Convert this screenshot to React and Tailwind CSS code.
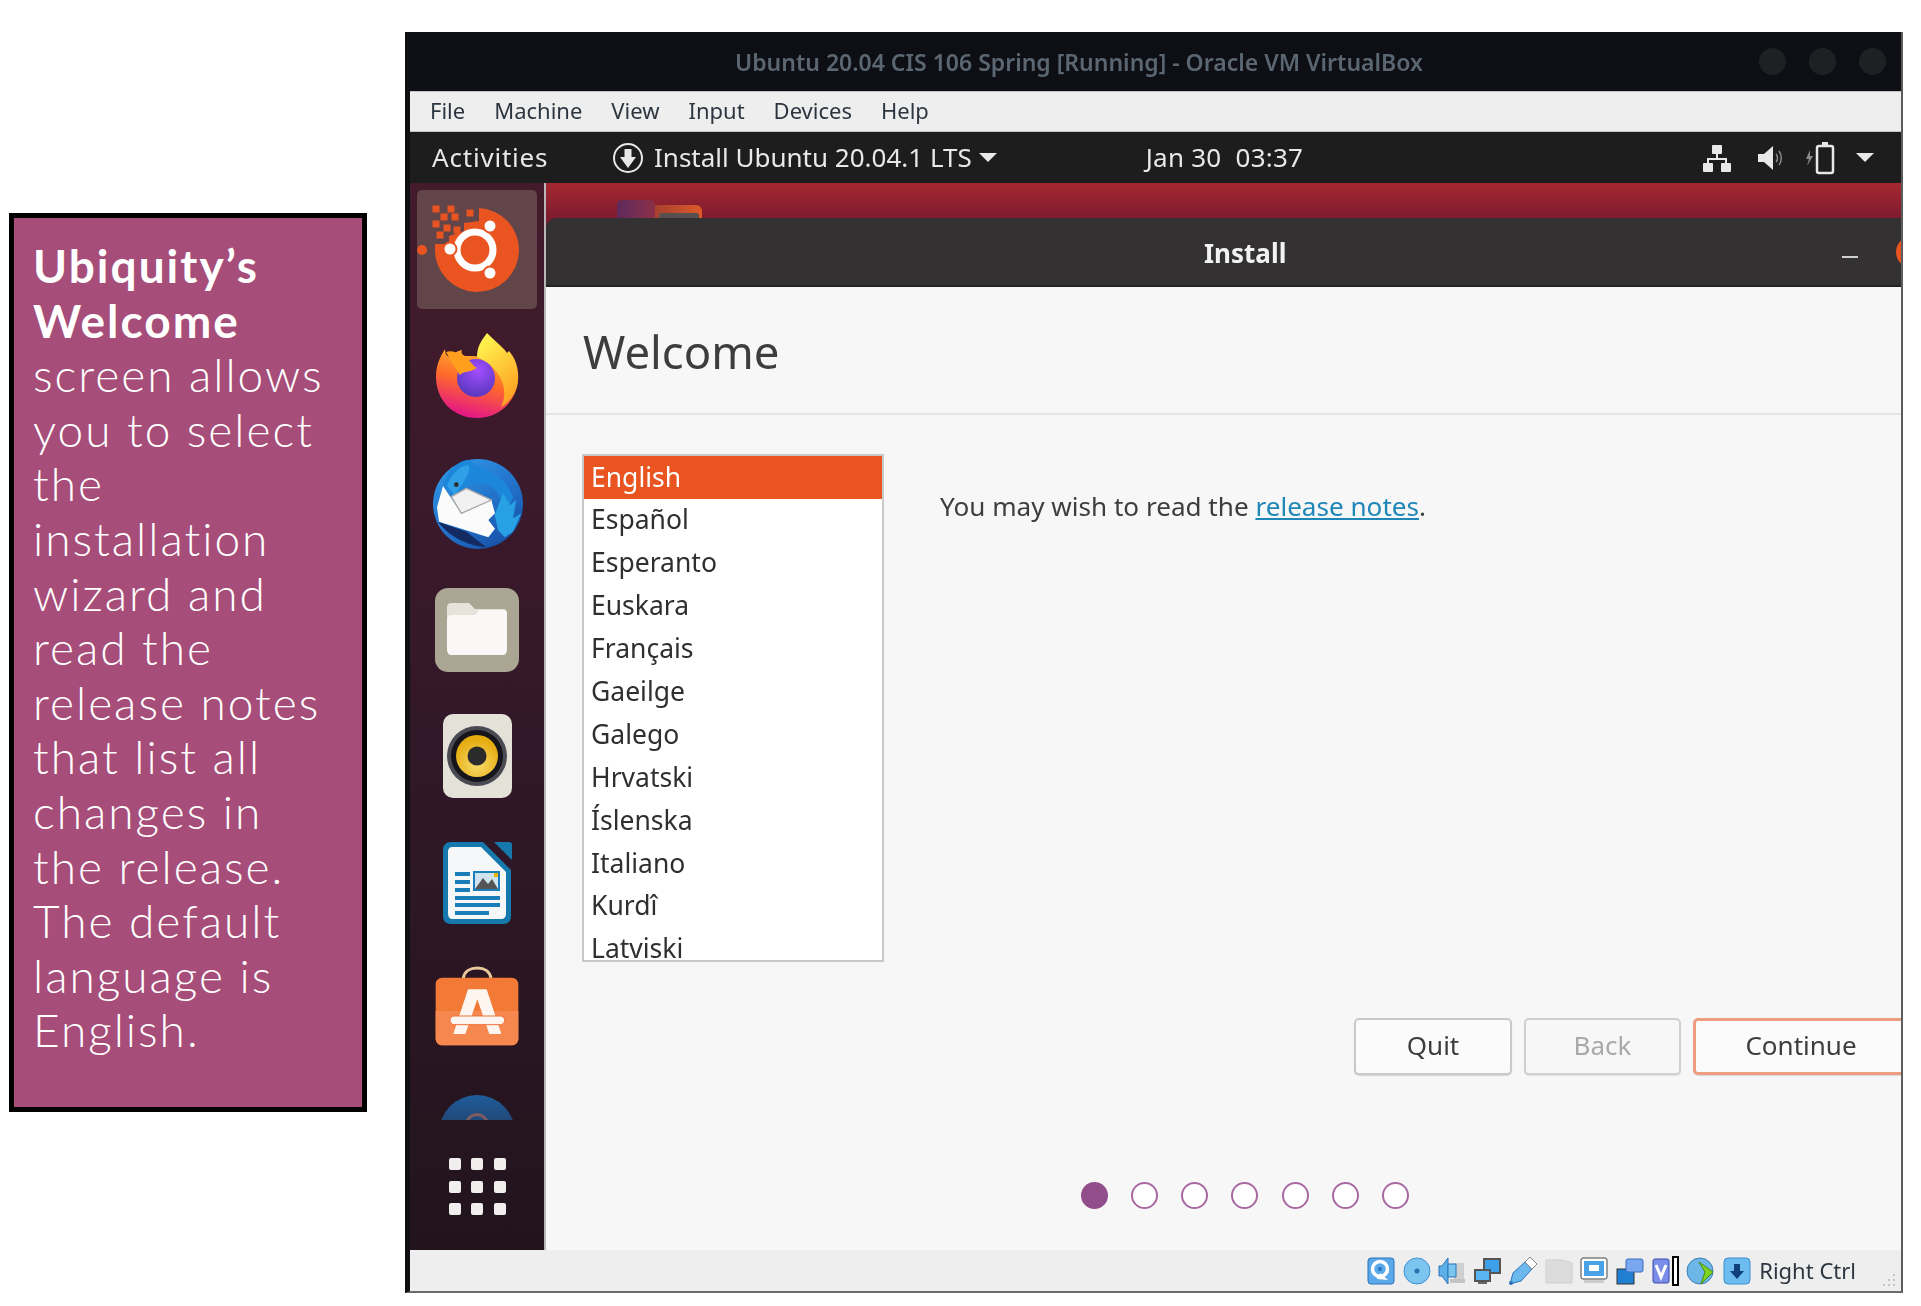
import React from 'react'

const languages = ['Español', 'Esperanto', 'Euskara', 'Français', 'Gaeilge', 'Galego', 'Hrvatski', 'Íslenska', 'Italiano', 'Kurdî', 'Latviski']
const menus = ['File', 'Machine', 'View', 'Input', 'Devices', 'Help']

function UbuntuIcon() {
  const bits = [[19,19],[34,19],[53,23],[27,27],[38,27],[19,34],[30,38],[40,40],[23,45]]
  return (
    <svg width="120" height="119" viewBox="0 0 120 119">
      <circle cx="5" cy="60" r="5" fill="#e95420" />
      <path d="M62 18A42 42 0 1 1 18 59L18 54L32 54L32 46L47 41L47 33L62 31Z" fill="#e95420" />
      {bits.map(([x, y], i) => <rect key={i} x={x - 3.5} y={y - 3.5} width="7" height="7" fill="#e95420" />)}
      <circle cx="58" cy="60" r="18" fill="none" stroke="#fff" strokeWidth="7" />
      <circle cx="73" cy="36" r="6.5" fill="#fff" stroke="#e95420" strokeWidth="2" />
      <circle cx="33" cy="59" r="6.5" fill="#fff" stroke="#e95420" strokeWidth="2" />
      <circle cx="73" cy="83" r="6.5" fill="#fff" stroke="#e95420" strokeWidth="2" />
    </svg>
  )
}

function FirefoxIcon() {
  return (
    <svg width="84" height="85" viewBox="0 0 84 85">
      <defs>
        <linearGradient id="ffBody" x1="0.7" y1="0" x2="0.4" y2="1">
          <stop offset="0" stopColor="#ffbd2e" />
          <stop offset="0.5" stopColor="#ff6a2a" />
          <stop offset="1" stopColor="#e3148a" />
        </linearGradient>
        <linearGradient id="ffTop" x1="0.3" y1="0" x2="0.8" y2="1">
          <stop offset="0" stopColor="#fff44f" />
          <stop offset="1" stopColor="#ff9a1f" />
        </linearGradient>
        <radialGradient id="ffGlobe" cx="0.55" cy="0.3" r="0.8">
          <stop offset="0" stopColor="#a34dff" />
          <stop offset="1" stopColor="#4f35b5" />
        </radialGradient>
      </defs>
      <path d="M1 44C1 32 5 24 10 16C10 22 13 24 15 24C18 20 22 18 27 17C26 20 27 23 32 23C50 22 74 28 83 42C84 68 64 85 42 85C18 85 1 67 1 44Z" fill="url(#ffBody)" />
      <path d="M52 0C62 10 68 14 72 20L74 18C81 26 84 36 83 48C82 60 74 70 66 74C74 58 68 36 42 24C42 14 46 8 52 0Z" fill="url(#ffTop)" />
      <circle cx="41" cy="45" r="19" fill="url(#ffGlobe)" />
      <path d="M11 19C17 17 21 20 28 22C34 26 38 33 42 35C34 40 28 38 25 42C22 38 16 28 11 19Z" fill="#ff9f1c" />
    </svg>
  )
}

// drawn in the 3x coordinates of the icon crop
function ThunderbirdIcon() {
  return (
    <svg width="110" height="110" viewBox="0 0 330 330">
      <defs>
        <linearGradient id="tbBody" x1="0.2" y1="0" x2="0.9" y2="1">
          <stop offset="0" stopColor="#2f95e6" />
          <stop offset="0.6" stopColor="#1f6cc4" />
          <stop offset="1" stopColor="#154a9e" />
        </linearGradient>
      </defs>
      <circle cx="165" cy="162" r="135" fill="url(#tbBody)" />
      <path d="M45 215C70 250 120 285 190 292L130 245Z" fill="#142a63" />
      <path d="M60 105C75 60 110 30 135 30C150 32 140 40 160 48C210 60 250 90 270 140L250 190L225 130C200 95 160 90 130 110L95 135Z" fill="#1c86da" />
      <path d="M240 130L262 165L280 150L270 205L295 190L270 245L245 262L225 240L215 195Z" fill="#27a0e4" />
      <path d="M72 108C85 70 115 45 135 45C150 60 120 100 95 135Z" fill="#2f9fe8" />
      <path d="M42 172L60 108L115 190L205 150L216 190L196 210L216 236L196 262L48 215Z" fill="#fbfbfb" />
      <path d="M85 140L130 115L205 150L115 190Z" fill="#f1f1f1" stroke="#a9a9a9" strokeWidth="4" />
      <circle cx="100" cy="104" r="7" fill="#2c2c2c" />
    </svg>
  )
}

function FilesIcon() {
  return (
    <svg width="84" height="84" viewBox="0 0 84 84">
      <rect width="84" height="84" rx="13" fill="#aba594" />
      <path d="M12 20C12 16 14 15 17 15H34L40 21H68C71 21 72 23 72 25V40H12Z" fill="#e6e3da" />
      <path d="M12 32C12 30 13 27 16 27H40L44 22H68C71 22 72 24 72 26V62C72 65 70 67 68 67H16C14 67 12 65 12 62Z" fill="#f9f8f6" />
    </svg>
  )
}

function SpeakerIcon() {
  return (
    <svg width="69" height="84" viewBox="0 0 69 84">
      <defs>
        <radialGradient id="spYellow" cx="0.5" cy="0.7" r="0.6">
          <stop offset="0" stopColor="#f9dc6b" />
          <stop offset="1" stopColor="#e5ac10" />
        </radialGradient>
      </defs>
      <rect width="69" height="84" rx="10" fill="#e4e1d8" />
      <circle cx="34" cy="42" r="30" fill="#4a4a52" />
      <circle cx="34" cy="42" r="26" fill="#15151b" />
      <circle cx="34" cy="42" r="21" fill="url(#spYellow)" />
      <circle cx="34" cy="42" r="9.5" fill="#2b2b2b" />
    </svg>
  )
}

function WriterIcon() {
  return (
    <svg width="69" height="82" viewBox="0 0 69 82">
      <path d="M8 0H40L68 28V74C68 79 65 82 60 82H8C3 82 0 79 0 74V8C0 3 3 0 8 0Z" fill="#1679ae" />
      <path d="M9 5H38L63 30V72C63 75 61 77 58 77H9C7 77 5 75 5 72V9C5 7 7 5 9 5Z" fill="#f5f7f8" />
      <path d="M51 0H66C68 0 69 1 69 3V18Z" fill="#1679ae" />
      <g fill="#1a7ebb">
        <rect x="12" y="30" width="15" height="4" />
        <rect x="12" y="38" width="15" height="4" />
        <rect x="12" y="46" width="15" height="4" />
        <rect x="12" y="54" width="45" height="4" />
        <rect x="12" y="61" width="45" height="4" />
        <rect x="12" y="69" width="34" height="4" />
        <rect x="30" y="29" width="27" height="20" />
      </g>
      <rect x="32" y="31" width="23" height="16" fill="#cfe3ef" />
      <path d="M32 47L40 36L45 42L49 37L55 47Z" fill="#555" />
      <rect x="51" y="31" width="4" height="4" fill="#e8b400" />
    </svg>
  )
}

function SoftwareIcon() {
  return (
    <svg width="110" height="100" viewBox="0 0 330 300">
      <path d="M118 68C120 45 140 36 160 36C180 36 198 45 201 68" fill="none" stroke="#e9c89c" strokeWidth="9" />
      <rect x="35" y="65" width="248" height="203" rx="20" fill="#f27a36" />
      <path d="M35 165H283V248C283 260 273 268 263 268H55C45 268 35 260 35 248Z" fill="#f6884f" />
      <path d="M132 100H188L232 234H196L160 130L124 234H88Z" fill="#fdf6f0" />
      <rect x="78" y="180" width="164" height="26" rx="13" fill="#fdf6f0" stroke="#f0703a" strokeWidth="3" />
    </svg>
  )
}

// the dock cuts this one off, only the top of the disc shows
function DiscPeek() {
  return (
    <div className="w-[76px] h-[25px] overflow-hidden">
      <div className="w-[76px] h-[76px] rounded-full bg-gradient-to-b from-[#1f5d9c] to-[#1b2238] flex justify-center pt-[18px]">
        <div className="w-[24px] h-[24px] rounded-full border-[3px] border-[#7d5c62]" />
      </div>
    </div>
  )
}

function DownloadCircle() {
  return (
    <svg width="32" height="32" viewBox="0 0 32 32">
      <circle cx="16" cy="16" r="14" fill="none" stroke="#e8e8e8" strokeWidth="2" />
      <path d="M12.5 7H19.5V15H24L16 26L8 15H12.5Z" fill="#e8e8e8" />
    </svg>
  )
}

function TrayIcons() {
  return (
    <div className="flex items-center">
      <svg width="30" height="30" viewBox="0 0 30 30" className="mr-[24px]">
        <g fill="#e8e8e8">
          <rect x="10" y="2" width="10" height="9" rx="1" />
          <rect x="1" y="20" width="10" height="9" rx="1" />
          <rect x="19" y="20" width="10" height="9" rx="1" />
        </g>
        <path d="M15 10V16M6 21V16H24V21" stroke="#e8e8e8" strokeWidth="2" fill="none" />
      </svg>
      <svg width="30" height="30" viewBox="0 0 30 30" className="mr-[18px]">
        <path d="M2 11H8L17 3V27L8 19H2Z" fill="#e8e8e8" />
        <path d="M20 11C22 13 22 17 20 19M23 8C26 12 26 18 23 22" stroke="#8a8a8a" strokeWidth="1.5" fill="none" />
      </svg>
      <svg width="32" height="34" viewBox="0 0 32 34" className="mr-[20px]">
        <path d="M6 9L2 18H5L3 25L9 15H6Z" fill="#8a8a8a" />
        <rect x="13" y="5" width="16" height="27" rx="2" fill="none" stroke="#e8e8e8" strokeWidth="2.5" />
        <rect x="18" y="1" width="6" height="4" fill="#e8e8e8" />
      </svg>
      <Caret />
    </div>
  )
}

function Caret() {
  return <div className="w-0 h-0 border-l-[9px] border-r-[9px] border-t-[9px] border-l-transparent border-r-transparent border-t-[#e8e8e8]" />
}

function StatusIcons() {
  return (
    <div className="flex items-center gap-[7.2px]">
      <svg width="28" height="28" viewBox="0 0 28 28">
        <rect x="1" y="1" width="26" height="26" rx="3" fill="#5aa9ea" stroke="#2a73ba" />
        <circle cx="13" cy="12" r="7.5" fill="none" stroke="#fff" strokeWidth="3.5" />
        <path d="M13 16L21 23L10 22Z" fill="#fff" />
        <circle cx="13" cy="12" r="2" fill="#2a73ba" />
      </svg>
      <svg width="28" height="28" viewBox="0 0 28 28">
        <circle cx="14" cy="14" r="13" fill="#7cc5ee" stroke="#3d90d0" />
        <circle cx="14" cy="14" r="2.5" fill="#2a6fb0" />
      </svg>
      <svg width="28" height="28" viewBox="0 0 28 28">
        <rect x="16" y="6" width="10" height="16" fill="#d0d0d0" />
        <rect x="12" y="22" width="15" height="4" fill="#c4c4c4" />
        <path d="M1 9H4L10 1V27L4 19H1Z" fill="#5cb0e8" stroke="#2a73ba" />
        <path d="M10 7H18V20H10Z" fill="#7cc5ee" stroke="#2a73ba" />
      </svg>
      <svg width="28" height="28" viewBox="0 0 28 28">
        <rect x="11" y="2" width="16" height="14" fill="#3da0ea" stroke="#555" strokeWidth="2" />
        <rect x="1" y="12" width="17" height="13" fill="#fff" />
        <rect x="2" y="13" width="15" height="11" fill="#58b4f2" stroke="#555" strokeWidth="2" />
        <rect x="5" y="25" width="9" height="2" fill="#666" />
      </svg>
      <svg width="30" height="30" viewBox="0 0 30 30">
        <path d="M2 28L5 17L17 6L24 13L13 25Z" fill="#6bb8ee" stroke="#2a73ba" />
        <path d="M17 6L22 1L29 8L24 13Z" fill="#fff" stroke="#888" />
        <circle cx="3" cy="27" r="2" fill="#2a73ba" />
      </svg>
      <svg width="28" height="28" viewBox="0 0 28 28">
        <path d="M1 3H18L27 6V26H1Z" fill="#dcdcdc" stroke="#cfcfcf" />
      </svg>
      <svg width="28" height="28" viewBox="0 0 28 28">
        <rect x="1" y="1" width="26" height="21" rx="2" fill="#fff" stroke="#444" />
        <rect x="4" y="4" width="20" height="15" fill="#4aa3e6" />
        <rect x="9" y="8" width="10" height="6" fill="#fff" />
        <rect x="4" y="23" width="20" height="3" fill="#ccc" />
      </svg>
      <svg width="28" height="28" viewBox="0 0 28 28">
        <rect x="1" y="12" width="17" height="15" fill="#1f7fd0" stroke="#333" />
        <rect x="10" y="2" width="17" height="13" rx="2" fill="#7aa8f0" stroke="#3a6cc0" />
      </svg>
      <div className="flex items-center gap-[1px]">
        <svg width="20" height="28" viewBox="0 0 20 28">
          <rect x="2" y="2" width="16" height="24" rx="2" fill="#7a8de8" stroke="#3a4ab0" />
          <path d="M5 8L10 20L15 8" stroke="#fff" strokeWidth="3" fill="none" />
        </svg>
        <div className="w-[7px] h-[30px] border-2 border-black bg-white" />
      </div>
      <svg width="30" height="30" viewBox="0 0 30 30">
        <circle cx="14" cy="15" r="13" fill="#6cb6e8" stroke="#3d80b8" />
        <path d="M13 6L27 16L15 28L19 16Z" fill="#7ed321" stroke="#4a8a10" />
      </svg>
      <svg width="28" height="28" viewBox="0 0 28 28">
        <rect x="1" y="1" width="26" height="26" rx="4" fill="#6cbcf0" stroke="#3d90d0" />
        <path d="M11 7H17V14H21L14 22L7 14H11Z" fill="#103f7a" />
      </svg>
    </div>
  )
}

function Grip() {
  return (
    <div className="grid grid-cols-3 gap-[3px] ml-[27px] self-end mb-[5px] mr-[6px]">
      {[0, 0, 1, 0, 1, 1, 1, 1, 1].map((on, i) => (
        <div key={i} className={on ? 'w-[2px] h-[2px] bg-[#c4c4c4]' : 'w-[2px] h-[2px]'} />
      ))}
    </div>
  )
}

function Dock() {
  return (
    <div className="w-[136px] shrink-0 h-full flex flex-col items-center bg-gradient-to-b from-[#431b2b] via-[#33182a] to-[#21141c] border-r-2 border-[#b9b6b9]">
      <div className="mt-[7px] w-[120px] h-[119px] rounded-[5px] bg-[#614549]"><UbuntuIcon /></div>
      <div className="mt-[24px]"><FirefoxIcon /></div>
      <div className="mt-[32px] ml-[2px]"><ThunderbirdIcon /></div>
      <div className="mt-[28px]"><FilesIcon /></div>
      <div className="mt-[42px]"><SpeakerIcon /></div>
      <div className="mt-[44px]"><WriterIcon /></div>
      <div className="mt-[32px] ml-[4px]"><SoftwareIcon /></div>
      <div className="mt-[39px]"><DiscPeek /></div>
      <div className="mt-[38px] grid grid-cols-3 gap-[10.5px]">
        {[1, 2, 3, 4, 5, 6, 7, 8, 9].map((n) => <div key={n} className="w-[12px] h-[12px] rounded-[2px] bg-[#f0efee]" />)}
      </div>
    </div>
  )
}

function InstallWindow() {
  return (
    <div className="flex-1 min-w-0 flex flex-col h-full bg-[#7e1c2f]">
      <div className="h-[35px] shrink-0 bg-gradient-to-b from-[#a6272e] to-[#7e1c2f] pl-[71px] flex items-end overflow-hidden">
        <div className="w-[38px] h-[18px] rounded-t-[5px] bg-gradient-to-r from-[#5e2a5c] to-[#8c2f48]" />
        <div className="w-[47px] h-[13px] rounded-tr-[6px] bg-gradient-to-r from-[#a8402f] to-[#dc5a28] flex items-end justify-center">
          <div className="w-[40px] h-[5px] rounded-t-[3px] bg-[#58504f]" />
        </div>
      </div>
      <div className="h-[69px] shrink-0 bg-[#333131] border-b-2 border-[#222] rounded-tl-[10px] flex items-center relative z-10">
        <span className="pl-[658px] pt-[3px] text-[26px] font-bold text-[#f2f2f2] leading-none">Install</span>
        <span className="ml-auto w-[16px] h-[2px] bg-[#cfcfcf] mt-[10px]" />
        <span className="ml-[38px] -mr-[32px] w-[37px] h-[32px] shrink-0 rounded-full bg-[#e95420]" />
      </div>
      <div className="flex-1 bg-[#f7f7f7] flex flex-col min-h-0">
        <div className="h-[128px] shrink-0 border-b-2 border-[#e6e6e6] flex items-center pl-[37px] pt-[4px]">
          <h1 className="text-[45.5px] text-[#3d3d3d] leading-none">Welcome</h1>
        </div>
        <div className="flex pl-[36px] pt-[39px]">
          <div className="w-[302px] h-[508px] shrink-0 border-2 border-[#c8c8c8] bg-white overflow-hidden">
            <div className="h-[42.9px] bg-[#e95420] text-white pl-[7px] flex items-center text-[26.5px]">English</div>
            {languages.map((lang) => (
              <div key={lang} className="h-[42.9px] pl-[7px] flex items-center text-[26.5px] text-[#2f2f2f]">{lang}</div>
            ))}
          </div>
          <p className="ml-[56px] mt-[30px] text-[26.1px] text-[#3d3d3d] leading-[44px] whitespace-nowrap">
            You may wish to read the <a className="text-[#1f86b8] underline">release notes</a>.
          </p>
        </div>
        <div className="flex pl-[808px] gap-[12px] mt-[56px] overflow-hidden pb-[3px]">
          <div className="w-[158px] h-[57px] shrink-0 rounded-[5px] border-2 border-[#c9c9c9] bg-[#fbfbfb] shadow-[0_1px_1px_#d5d5d5] flex items-center justify-center pb-[2px] text-[26px] text-[#3d3d3d]">Quit</div>
          <div className="w-[157px] h-[57px] shrink-0 rounded-[5px] border-2 border-[#d0d0d0] bg-[#f7f7f7] shadow-[0_1px_1px_#dddddd] flex items-center justify-center pb-[2px] text-[26px] text-[#a9a9a9]">Back</div>
          <div className="w-[216px] h-[57px] shrink-0 rounded-[5px] border-[3px] border-[#ee9e80] bg-[#fbfbfb] shadow-[0_1px_1px_#d5d5d5] flex items-center justify-center pb-[2px] text-[26px] text-[#3d3d3d]">Continue</div>
        </div>
        <div className="flex pl-[534.5px] gap-[23.3px] mt-[104px]">
          <div className="w-[27px] h-[27px] rounded-full bg-[#924d8b]" />
          {[1, 2, 3, 4, 5, 6].map((n) => <div key={n} className="w-[27px] h-[27px] rounded-full border-2 border-[#a868a2] bg-white" />)}
        </div>
      </div>
    </div>
  )
}

function App() {
  return (
    <div className="w-[1921px] h-[1306px] bg-white flex items-start overflow-hidden font-['Noto_Sans',sans-serif]">
      <div className="ml-[9px] mt-[213px] w-[358px] h-[899px] shrink-0 border-[5px] border-black bg-[#a64d79] pl-[19px] pr-[20px] pt-[21px] text-white text-[46px] leading-[54.6px] font-light font-['Lato',sans-serif] tracking-[2px]">
        <b className="font-bold">Ubiquity’s Welcome</b> screen allows you to select the installation wizard and read the release notes that list all changes in the release. The default language is English.
      </div>

      <div className="ml-[38px] mt-[32px] w-[1498px] h-[1261px] shrink-0 flex flex-col overflow-hidden border-l-[5px] border-r-2 border-b-2 border-l-[#0d0f12] border-r-[#5c5c5c] border-b-[#6b6b6b] blur-[0.4px]">
        <div className="h-[59px] shrink-0 bg-[#0e0f14] flex items-center relative">
          <span className="ml-[325px] pt-[2px] text-[23px] font-semibold text-[#5a6672] whitespace-nowrap">Ubuntu 20.04 CIS 106 Spring [Running] - Oracle VM VirtualBox</span>
          <div className="ml-auto mr-[15px] flex gap-[23px]">
            <div className="w-[27px] h-[27px] rounded-full bg-[#1f2023]" />
            <div className="w-[27px] h-[27px] rounded-full bg-[#1f2023]" />
            <div className="w-[27px] h-[27px] rounded-full bg-[#1f2023]" />
          </div>
        </div>
        <div className="h-[41px] shrink-0 bg-[#eeeeee] border-t border-b border-[#c4c4c4] flex items-center pl-[20px] pb-[2px] gap-[29px] text-[22px] text-[#2d3640]">
          {menus.map((m) => <span key={m}>{m}</span>)}
        </div>
        <div className="h-[51px] shrink-0 bg-[#1d1d1d] flex items-center pl-[22px] text-[26px] text-[#e8e8e8]">
          <span className="w-[180px] tracking-[0.8px]">Activities</span>
          <DownloadCircle />
          <span className="ml-[10px] whitespace-nowrap">Install Ubuntu 20.04.1 LTS</span>
          <span className="ml-[7px]"><Caret /></span>
          <span className="ml-[149px] whitespace-nowrap tracking-[0.25px]">Jan 30&nbsp; 03:37</span>
          <span className="ml-auto mr-[27px]"><TrayIcons /></span>
        </div>
        <div className="flex-1 min-h-0 flex">
          <Dock />
          <InstallWindow />
        </div>
        <div className="h-[41px] shrink-0 bg-[#eeeeee] flex items-center justify-end text-[22px] text-[#2d3640]">
          <StatusIcons />
          <span className="ml-[8px] whitespace-nowrap">Right Ctrl</span>
          <Grip />
        </div>
      </div>
    </div>
  )
}

export default App
